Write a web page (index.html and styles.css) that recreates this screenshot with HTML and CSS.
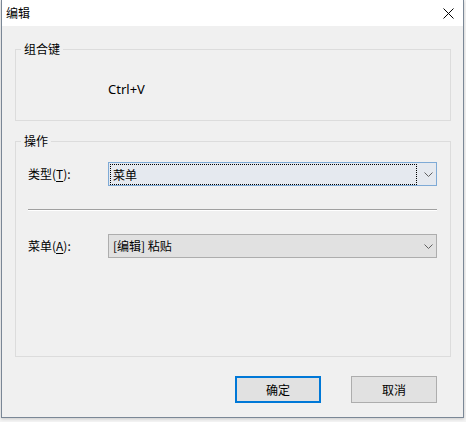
FILE: index.html
```html
<!DOCTYPE html>
<html>
<head>
<meta charset="utf-8">
<link rel="stylesheet" href="styles.css">
</head>
<body>
<div class="window">
  <div class="titlebar">
    <span class="title">编辑</span>
    <svg class="close" width="11" height="11" viewBox="0 0 11 11"><path d="M0.5 0.5 L10.5 10.5 M10.5 0.5 L0.5 10.5" stroke="#000" stroke-width="1" fill="none"/></svg>
  </div>
  <div class="content">
    <div class="group g1">
      <div class="group-title">组合键</div>
      <div class="hotkey">Ctrl+V</div>
    </div>
    <div class="group g2">
      <div class="group-title">操作</div>
      <div class="row r1">
        <span class="label">类型(<u>T</u>):</span>
        <div class="combo focused">
          <span class="focus-rect">菜单</span>
          <svg class="chev" width="9" height="5" viewBox="0 0 9 5"><path d="M0.5 0.5 L4.5 4.5 L8.5 0.5" stroke="#606060" stroke-width="1" fill="none"/></svg>
        </div>
      </div>
      <div class="sep"></div>
      <div class="row r2">
        <span class="label">菜单(<u>A</u>):</span>
        <div class="combo">
          <span class="value">[编辑] 粘贴</span>
          <svg class="chev" width="9" height="5" viewBox="0 0 9 5"><path d="M0.5 0.5 L4.5 4.5 L8.5 0.5" stroke="#606060" stroke-width="1" fill="none"/></svg>
        </div>
      </div>
    </div>
    <div class="buttons">
      <button class="btn primary">确定</button>
      <button class="btn">取消</button>
    </div>
  </div>
</div>
</body>
</html>
```

FILE: styles.css
```css
html, body {
  margin: 0;
  padding: 0;
}
body {
  background: #f4f4f4;
  height: 422px;
  font-family: "Noto Sans", "Noto Sans CJK SC", sans-serif;
  font-size: 13px;
  color: #000;
  overflow: hidden;
}
.window {
  margin-left: 1px;
  width: 463px;
  height: 418px;
  box-sizing: border-box;
  border: 1px solid #7a8796;
  border-top: 0;
  background: #f0f0f0;
  box-shadow: 0 1px 3px rgba(0, 0, 0, 0.18);
}
.titlebar {
  height: 26px;
  background: #fff;
  display: flex;
  align-items: center;
  justify-content: space-between;
  padding: 0 9px 0 4px;
}
.title {
  font-family: "Noto Sans CJK SC", sans-serif;
  font-size: 12px;
  line-height: 16px;
}
.close {
  display: block;
}
.content {
  padding: 0 11px 0 13px;
}
.group {
  border: 1px solid #dcdcdc;
  width: 436px;
  box-sizing: border-box;
}
.group-title {
  width: max-content;
  margin: -9px 0 0 5px;
  padding: 0 3px;
  background: #f0f0f0;
  line-height: 16px;
  font-family: "Noto Sans CJK SC", sans-serif;
  font-size: 12px;
}
.g1 {
  margin-top: 23px;
  padding-bottom: 23px;
}
.hotkey {
  margin-top: 24px;
  padding-left: 92px;
  line-height: 16px;
}
.g2 {
  margin-top: 20px;
  padding-bottom: 98px;
}
.row {
  display: flex;
  align-items: center;
  padding-left: 12px;
  height: 24px;
}
.r1 {
  margin-top: 13px;
}
.r2 {
  margin-top: 23px;
}
.label {
  width: 80px;
  font-family: "Noto Sans CJK SC", sans-serif;
  font-size: 12px;
  line-height: 16px;
}
.label u {
  text-decoration-thickness: 1px;
  text-underline-offset: 2px;
}
.combo {
  width: 329px;
  height: 24px;
  box-sizing: border-box;
  border: 1px solid #adadad;
  background: #e1e1e1;
  display: flex;
  align-items: center;
}
.combo.focused {
  border-color: #7eaad6;
  background: #e5e9ef;
}
.focus-rect {
  box-sizing: border-box;
  width: 307px;
  height: 21px;
  margin-left: 1px;
  border: 1px dotted #000;
  padding-left: 2px;
  line-height: 19px;
  font-family: "Noto Sans CJK SC", sans-serif;
  font-size: 12px;
}
.value {
  padding-left: 4px;
  line-height: 16px;
  font-family: "Noto Sans CJK SC", sans-serif;
  font-size: 12px;
}
.chev {
  display: block;
  margin-left: auto;
  margin-right: 3px;
}
.sep {
  margin: 23px 0 0 12px;
  width: 409px;
  height: 0;
  border-top: 1px solid #a0a0a0;
  border-bottom: 1px solid #fff;
}
.buttons {
  width: 436px;
  box-sizing: border-box;
  padding-right: 14px;
  margin-top: 19px;
  display: flex;
  justify-content: flex-end;
  gap: 30px;
}
.btn {
  width: 86px;
  height: 27px;
  box-sizing: border-box;
  margin: 0;
  padding: 0;
  border: 1px solid #adadad;
  background: #e1e1e1;
  font-family: "Noto Sans CJK SC", sans-serif;
  font-size: 12px;
  color: #000;
}
.btn.primary {
  border: 2px solid #0078d7;
}
```
